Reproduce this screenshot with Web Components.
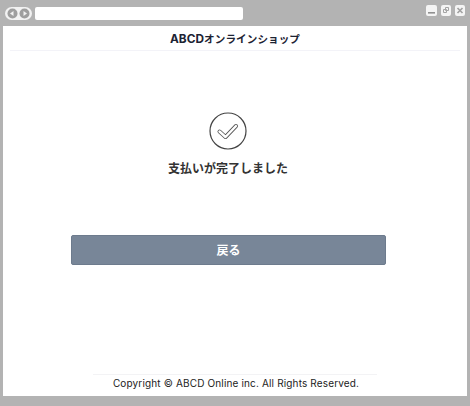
<!DOCTYPE html>
<html lang="ja">
<head>
<meta charset="utf-8">
<title>ABCDオンラインショップ</title>
<style>
  html, body { margin: 0; padding: 0; background: #b3b3b3; }
  body { width: 470px; height: 406px; overflow: hidden; font-family: Inter, "Noto Sans CJK JP", sans-serif; }
  .latin { font-size: 11.8px; }
</style>
</head>
<body>
<browser-frame>
  <shop-header><span class="latin">ABCD</span>オンラインショップ</shop-header>
  <payment-done>支払いが完了しました</payment-done>
  <back-button>戻る</back-button>
  <shop-footer>Copyright © ABCD Online inc. All Rights Reserved.</shop-footer>
</browser-frame>

<script>
(() => {

    const define = (name, html) => {
        customElements.define(name, class extends HTMLElement {
            constructor(){
                super()
                this.root = this.attachShadow({mode: 'open'})
                let template = document.createElement("template")
                template.innerHTML = html
                this.root.appendChild(template.content.cloneNode(true))
            }
        })
    }

    define("browser-frame", `
        <style>
            :host {
                display: flex;
                flex-direction: column;
                width: 470px;
                height: 406px;
                box-sizing: border-box;
                padding: 0 3px 10px 3px;
                background: #b3b3b3;
            }
            .bar {
                flex: none;
                height: 26px;
                display: flex;
                align-items: flex-start;
                box-sizing: border-box;
                padding: 7px 2px 0 2px;
            }
            .nav {
                width: 27px;
                height: 13px;
                border-radius: 7px;
                background: #f2f2f2;
                display: flex;
                align-items: center;
                justify-content: center;
                gap: 1px;
                margin-right: 3px;
            }
            .address {
                width: 208px;
                height: 13px;
                background: #fff;
                border-radius: 2px;
            }
            .buttons {
                margin: -2px 0 0 auto;
                display: flex;
                gap: 4px;
            }
            .buttons svg {
                display: block;
            }
            .page {
                flex: 1;
                min-height: 0;
                background: #fff;
                display: flex;
                flex-direction: column;
            }
        </style>
        <div class="bar">
            <div class="nav">
                <svg width="11" height="11" viewBox="0 0 11 11"><circle cx="5.5" cy="5.5" r="5" fill="#9e9e9e"/><path d="M3 5.5l3.5-2.6v5.2z" fill="#f2f2f2"/></svg>
                <svg width="11" height="11" viewBox="0 0 11 11"><circle cx="5.5" cy="5.5" r="5" fill="#9e9e9e"/><path d="M8 5.5L4.5 2.9v5.2z" fill="#f2f2f2"/></svg>
            </div>
            <div class="address"></div>
            <div class="buttons">
                <svg width="11" height="11" viewBox="0 0 11 11"><rect width="11" height="11" rx="2" fill="#f4f4f4"/><rect x="2" y="7" width="7" height="1.6" fill="#909090"/></svg>
                <svg width="10" height="11" viewBox="0 0 10 11"><rect width="10" height="11" rx="2" fill="#f4f4f4"/><path d="M4.5 2.5h3v3h-3zM2.5 4.5h3v3h-3z" fill="none" stroke="#a4a4a4"/></svg>
                <svg width="10" height="11" viewBox="0 0 10 11"><rect width="10" height="11" rx="2" fill="#f4f4f4"/><path d="M2.5 3l5 5M7.5 3l-5 5" stroke="#a0a0a0" stroke-width="1.6"/></svg>
            </div>
        </div>
        <div class="page"><slot></slot></div>
    `)

    define("shop-header", `
        <style>
            :host {
                display: block;
                margin: 0 7px;
                height: 25px;
                box-sizing: border-box;
                border-bottom: 1px solid #f3f3f8;
                color: #1c2333;
                font-size: 10.6px;
                letter-spacing: .06px;
                font-weight: 700;
                line-height: 26px;
                text-align: center;
            }
        </style>
        <slot></slot>
    `)

    define("payment-done", `
        <style>
            :host {
                display: flex;
                flex-direction: column;
                align-items: center;
                padding: 61px 14px 0 0;
                color: #333;
                font-size: 12px;
                font-weight: 700;
            }
            svg {
                display: block;
                margin-bottom: 10px;
            }
            .msg {
                line-height: 17px;
            }
        </style>
        <svg width="38" height="38" viewBox="0 0 38 38">
            <circle cx="19" cy="19" r="18" fill="none" stroke="#444" stroke-width="1.2"/>
            <path d="M10.5 19.5L16.5 25 27 14" fill="none" stroke="#555" stroke-width="4" stroke-linecap="round" stroke-linejoin="round"/>
            <path d="M10.5 19.5L16.5 25 27 14" fill="none" stroke="#fff" stroke-width="2.4" stroke-linecap="round" stroke-linejoin="round"/>
        </svg>
        <div class="msg"><slot></slot></div>
    `)

    define("back-button", `
        <style>
            :host {
                display: block;
                margin: 58px 81px 0 68px;
            }
            button {
                display: block;
                width: 100%;
                height: 30px;
                padding: 0 0 2px 0;
                background: #788698;
                border: 1px solid #6d7b8d;
                border-radius: 2px;
                color: #fff;
                font: 700 12px Inter, "Noto Sans CJK JP", sans-serif;
            }
        </style>
        <button><slot></slot></button>
    `)

    define("shop-footer", `
        <style>
            :host {
                display: block;
                margin: auto 90px 0 90px;
                height: 22px;
                box-sizing: border-box;
                padding-left: 2px;
                border-top: 1px solid #f3f3f5;
                color: #222;
                font-size: 10px;
                letter-spacing: .15px;
                line-height: 17px;
                text-align: center;
                white-space: nowrap;
            }
        </style>
        <slot></slot>
    `)

})()
</script>
</body>
</html>
